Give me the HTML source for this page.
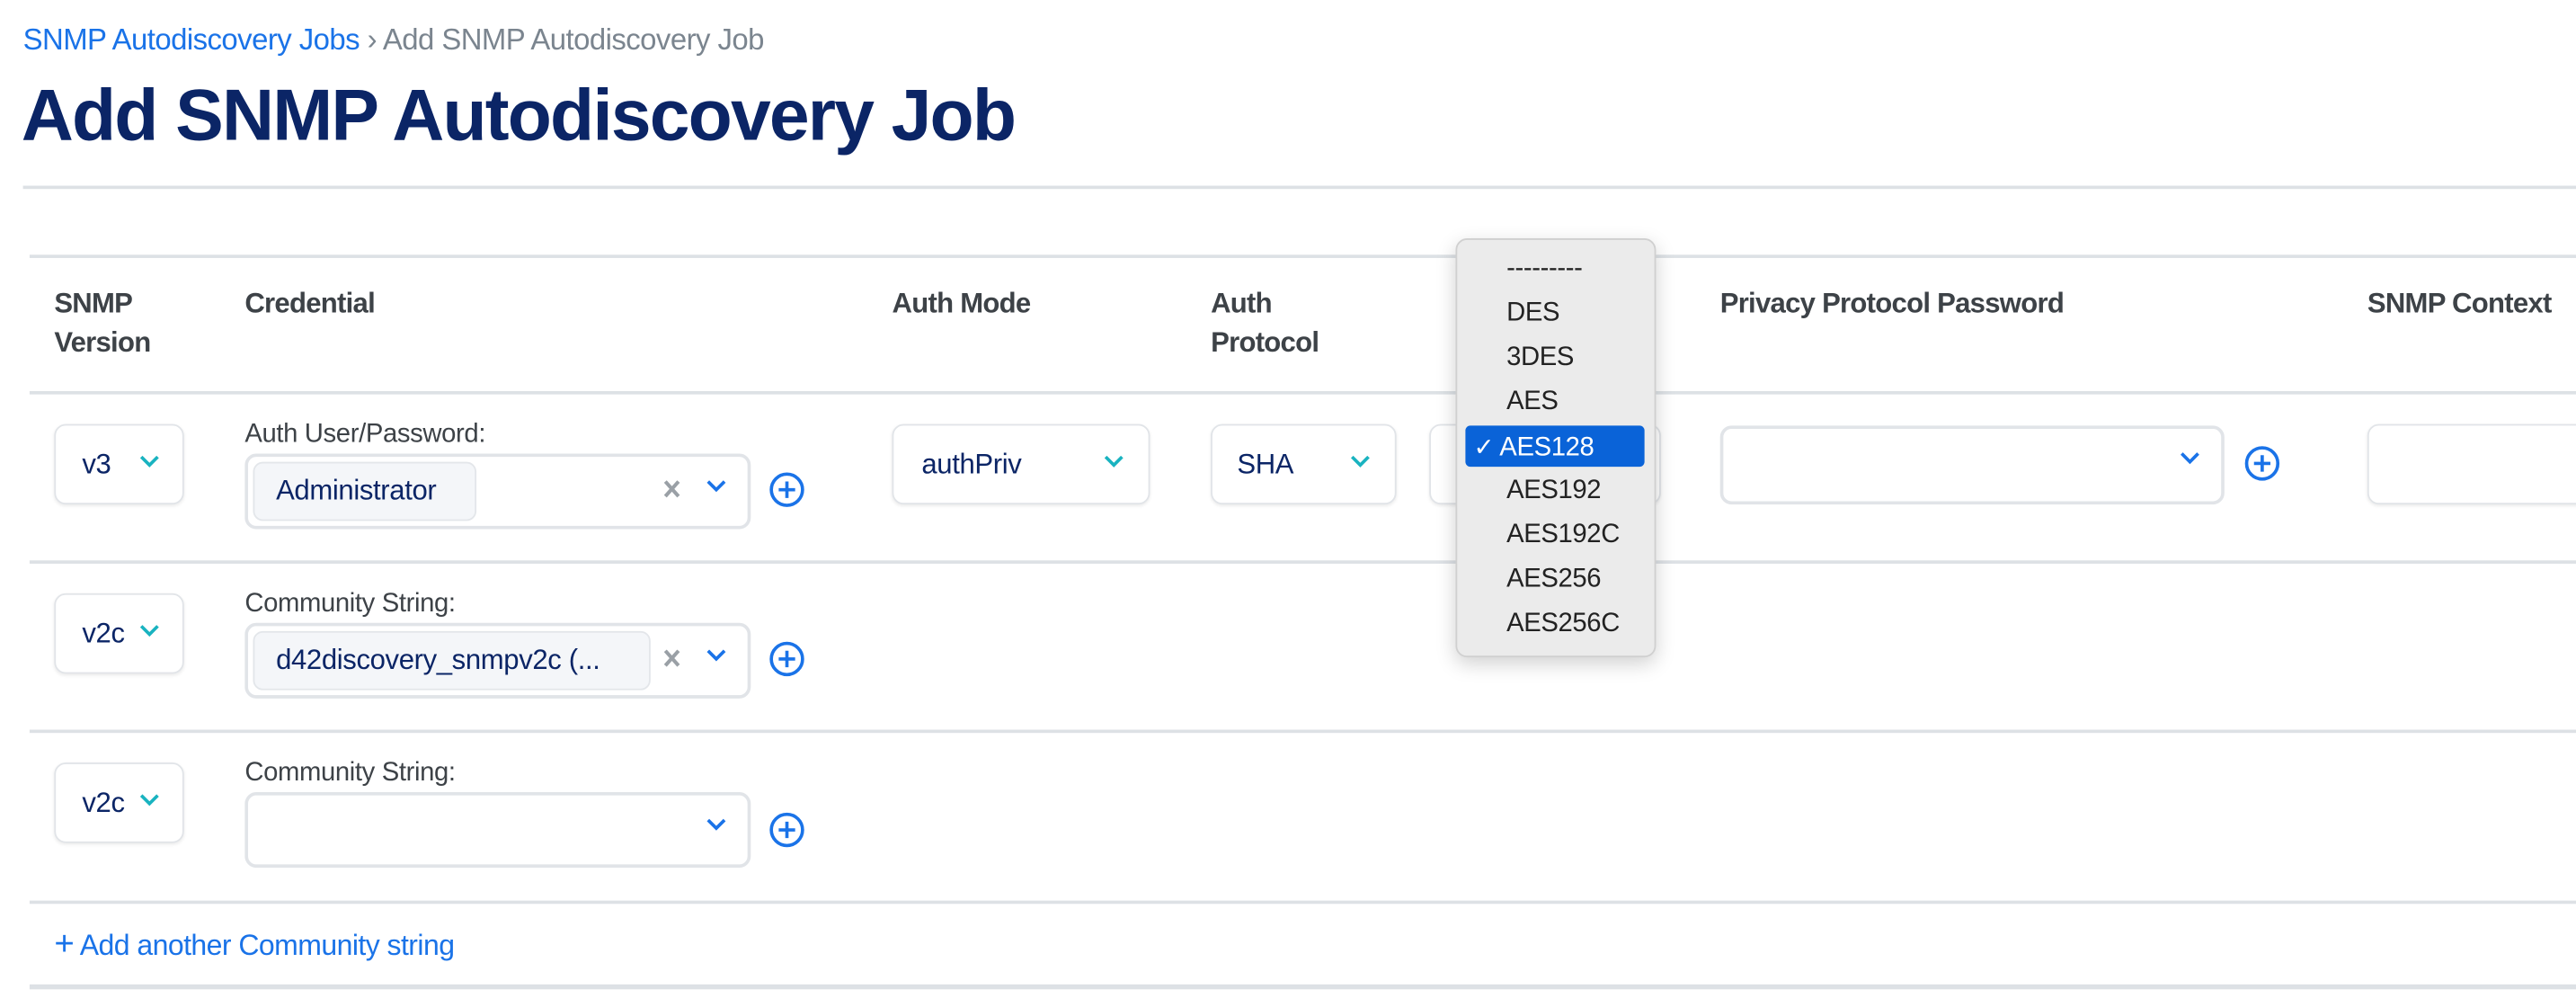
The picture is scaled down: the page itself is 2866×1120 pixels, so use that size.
<!DOCTYPE html>
<html><head><meta charset="utf-8">
<style>
html,body{margin:0;padding:0;width:2866px;height:1120px;overflow:hidden;background:#fff;}
#w{position:absolute;left:0;top:0;width:1568px;height:613px;transform:scale(1.8278);transform-origin:0 0;font-family:"Liberation Sans",sans-serif;}
.a{position:absolute;white-space:nowrap;}
.hr{position:absolute;height:1px;background:#dde1e5;right:0;}
.h{position:absolute;font-size:17px;font-weight:bold;color:#3d4247;line-height:24px;letter-spacing:-0.4px;white-space:nowrap;}
.box{position:absolute;border:1px solid #e1e4e8;border-radius:7px;background:#fff;box-shadow:0 1px 2px rgba(0,0,0,0.08);}
.val{position:absolute;font-size:17px;color:#0b2566;letter-spacing:-0.2px;white-space:nowrap;}
.lbl{position:absolute;font-size:16px;color:#3d4247;letter-spacing:-0.2px;white-space:nowrap;}
.chip{position:absolute;background:#f4f6f9;border:1px solid #e3e6ea;border-radius:6px;}
svg{position:absolute;overflow:visible;}
.dd{position:absolute;font-size:16px;color:#222;left:30px;letter-spacing:-0.2px;}
</style></head><body><div id="w">
<div class="a" style="left:14px;top:14px;font-size:18px;letter-spacing:-0.3px;"><span style="color:#1a73e8">SNMP Autodiscovery Jobs</span><span style="color:#7b858f"> › Add SNMP Autodiscovery Job</span></div>
<div class="a" style="left:13px;top:46px;font-size:44px;font-weight:bold;color:#0b2566;letter-spacing:-1px;">Add SNMP Autodiscovery Job</div>
<div class="hr" style="left:14px;top:113px;height:2px;"></div>

<div class="hr" style="left:18px;top:155px;height:2px;"></div>
<div class="h" style="left:33px;top:173px;">SNMP<br>Version</div>
<div class="h" style="left:149px;top:173px;">Credential</div>
<div class="h" style="left:543px;top:173px;">Auth Mode</div>
<div class="h" style="left:737px;top:173px;">Auth<br>Protocol</div>
<div class="h" style="left:1047px;top:173px;">Privacy Protocol Password</div>
<div class="h" style="left:1441px;top:173px;">SNMP Context</div>
<div class="hr" style="left:18px;top:238px;height:2px;"></div>

<!-- row1 -->
<div class="box" style="left:33px;top:258px;width:77px;height:47px;"></div>
<div class="val" style="left:50px;top:273px;">v3</div>
<svg style="left:85px;top:277px" width="12" height="8"><path d="M1 1l5 5 5-5" fill="none" stroke="#19b3c0" stroke-width="2"/></svg>
<div class="lbl" style="left:149px;top:256px;">Auth User/Password:</div>
<div class="box" style="left:149px;top:276px;box-shadow:none;border-width:2px;width:304px;height:42px;"></div>
<div class="chip" style="left:154px;top:281px;width:134px;height:34px;"></div>
<div class="val" style="left:168px;top:289px;">Administrator</div>
<svg style="left:404px;top:292px" width="10" height="11"><path d="M1 1l8 9M9 1l-8 9" stroke="#9aa0a6" stroke-width="2.2"/></svg>
<svg style="left:430px;top:292px" width="12" height="8"><path d="M1 1l5 5 5-5" fill="none" stroke="#1a73e8" stroke-width="2"/></svg>
<svg style="left:468px;top:287px" width="22" height="22"><circle cx="11" cy="11" r="9.5" fill="none" stroke="#1a73e8" stroke-width="2"/><path d="M11 6v10M6 11h10" stroke="#1a73e8" stroke-width="2"/></svg>
<div class="box" style="left:543px;top:258px;width:155px;height:47px;"></div>
<div class="val" style="left:561px;top:273px;">authPriv</div>
<svg style="left:672px;top:277px" width="12" height="8"><path d="M1 1l5 5 5-5" fill="none" stroke="#19b3c0" stroke-width="2"/></svg>
<div class="box" style="left:737px;top:258px;width:111px;height:47px;"></div>
<div class="val" style="left:753px;top:273px;">SHA</div>
<svg style="left:822px;top:277px" width="12" height="8"><path d="M1 1l5 5 5-5" fill="none" stroke="#19b3c0" stroke-width="2"/></svg>
<div class="box" style="left:870px;top:258px;width:139px;height:47px;"></div>
<div class="box" style="left:1047px;top:259px;box-shadow:none;border-width:2px;width:303px;height:44px;"></div>
<svg style="left:1327px;top:275px" width="12" height="8"><path d="M1 1l5 5 5-5" fill="none" stroke="#1a73e8" stroke-width="2"/></svg>
<svg style="left:1366px;top:271px" width="22" height="22"><circle cx="11" cy="11" r="9.5" fill="none" stroke="#1a73e8" stroke-width="2"/><path d="M11 6v10M6 11h10" stroke="#1a73e8" stroke-width="2"/></svg>
<div class="box" style="left:1441px;top:258px;width:200px;height:47px;"></div>
<div class="hr" style="left:18px;top:341px;height:2px;"></div>

<!-- row2 -->
<div class="box" style="left:33px;top:361px;width:77px;height:47px;"></div>
<div class="val" style="left:50px;top:376px;">v2c</div>
<svg style="left:85px;top:380px" width="12" height="8"><path d="M1 1l5 5 5-5" fill="none" stroke="#19b3c0" stroke-width="2"/></svg>
<div class="lbl" style="left:149px;top:359px;">Community String:</div>
<div class="box" style="left:149px;top:379px;width:304px;height:42px;box-shadow:none;border-width:2px;"></div>
<div class="chip" style="left:154px;top:384px;width:240px;height:34px;"></div>
<div class="val" style="left:168px;top:392px;">d42discovery_snmpv2c (...</div>
<svg style="left:404px;top:395px" width="10" height="11"><path d="M1 1l8 9M9 1l-8 9" stroke="#9aa0a6" stroke-width="2.2"/></svg>
<svg style="left:430px;top:395px" width="12" height="8"><path d="M1 1l5 5 5-5" fill="none" stroke="#1a73e8" stroke-width="2"/></svg>
<svg style="left:468px;top:390px" width="22" height="22"><circle cx="11" cy="11" r="9.5" fill="none" stroke="#1a73e8" stroke-width="2"/><path d="M11 6v10M6 11h10" stroke="#1a73e8" stroke-width="2"/></svg>
<div class="hr" style="left:18px;top:444px;height:2px;"></div>

<!-- row3 -->
<div class="box" style="left:33px;top:464px;width:77px;height:47px;"></div>
<div class="val" style="left:50px;top:479px;">v2c</div>
<svg style="left:85px;top:483px" width="12" height="8"><path d="M1 1l5 5 5-5" fill="none" stroke="#19b3c0" stroke-width="2"/></svg>
<div class="lbl" style="left:149px;top:462px;">Community String:</div>
<div class="box" style="left:149px;top:482px;width:304px;height:42px;box-shadow:none;border-width:2px;"></div>
<svg style="left:430px;top:498px" width="12" height="8"><path d="M1 1l5 5 5-5" fill="none" stroke="#1a73e8" stroke-width="2"/></svg>
<svg style="left:468px;top:494px" width="22" height="22"><circle cx="11" cy="11" r="9.5" fill="none" stroke="#1a73e8" stroke-width="2"/><path d="M11 6v10M6 11h10" stroke="#1a73e8" stroke-width="2"/></svg>
<div class="hr" style="left:18px;top:548px;height:2px;"></div>

<div class="a" style="left:33px;top:565px;font-size:17.5px;color:#1a73e8;letter-spacing:-0.3px;"><span style="font-size:21px;line-height:16px;">+</span> Add another Community string</div>
<div class="hr" style="left:18px;top:599px;height:3px;"></div>

<!-- dropdown -->
<div style="position:absolute;left:886px;top:145px;width:120px;height:253px;background:#ebebeb;border:1px solid #d0d0d0;border-radius:7px;box-shadow:0 4px 12px rgba(0,0,0,0.18);">
<div class="dd" style="top:9px;">---------</div>
<div class="dd" style="top:36px;">DES</div>
<div class="dd" style="top:63px;">3DES</div>
<div class="dd" style="top:90px;">AES</div>
<div style="position:absolute;left:5px;top:113px;width:109px;height:25px;background:#0a63d8;border-radius:3px;"></div>
<div class="dd" style="top:117px;color:#fff;left:10px;"><span style="font-size:15px">✓</span> AES128</div>
<div class="dd" style="top:144px;">AES192</div>
<div class="dd" style="top:171px;">AES192C</div>
<div class="dd" style="top:198px;">AES256</div>
<div class="dd" style="top:225px;">AES256C</div>
</div>
</div></body></html>
